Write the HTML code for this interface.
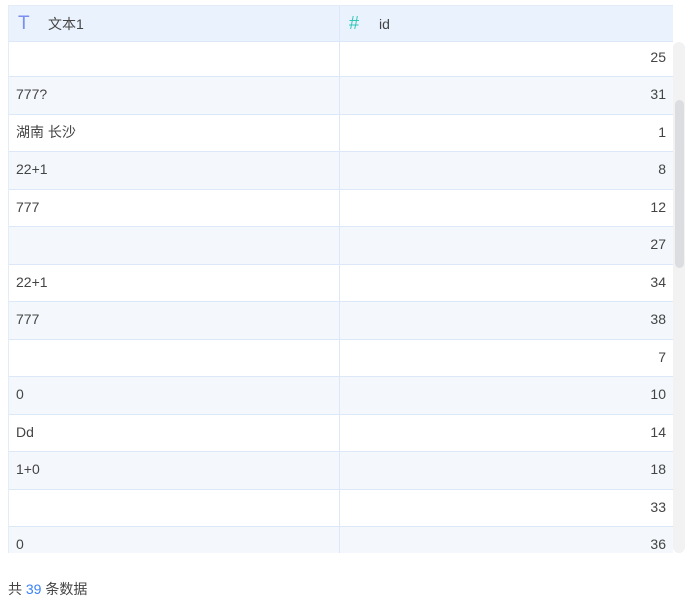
<!DOCTYPE html>
<html><head><meta charset="utf-8"><style>
body{margin:0;background:#fff;font-family:"Liberation Sans","Noto Sans CJK SC",sans-serif;font-size:14px;color:#444;}
.wrap{position:absolute;left:8px;top:5px;width:664px;height:548px;overflow:hidden;border-left:1px solid #e3ecf7;}
.hd{height:35px;background:#eaf2fd;border-top:1px solid #e3ecf7;border-bottom:1px solid #dce8f8;display:flex;}
.hd div{line-height:35px;}
.c1{width:331px;border-right:1px solid #dce8f8;box-sizing:border-box;padding-left:7px;}
.c2{flex:1;padding-right:7px;text-align:right;}
.hd .c2{text-align:left;padding-left:9px;}
.row{height:36.5px;border-bottom:1px solid #dce8f8;display:flex;line-height:34px;}
.row.first{height:34px;line-height:31px;}
.ic{display:inline-block;width:22px;font-size:19px;}
.track{position:absolute;left:673px;top:42px;width:12px;height:511px;background:#f2f2f2;border-radius:6px;}
.thumb{position:absolute;left:675px;top:100px;width:9px;height:168px;background:#dcdde1;border-radius:5px;}
.ft{position:absolute;left:8px;top:579px;font-size:14px;}
</style></head><body>
<div class="wrap">
<div class="hd"><div class="c1" style="padding-left:9px"><span class="ic" style="color:#7b8ff0">T</span><span style="margin-left:8px">文本1</span></div><div class="c2"><span class="ic" style="color:#2fc5b8;font-size:18px">#</span><span style="margin-left:8px">id</span></div></div>
<div class="rows">
<div class="row first" style="background:#fff"><div class="c1"></div><div class="c2">25</div></div>
<div class="row" style="background:#f4f8fd"><div class="c1">777?</div><div class="c2">31</div></div>
<div class="row" style="background:#fff"><div class="c1">湖南 长沙</div><div class="c2">1</div></div>
<div class="row" style="background:#f4f8fd"><div class="c1">22+1</div><div class="c2">8</div></div>
<div class="row" style="background:#fff"><div class="c1">777</div><div class="c2">12</div></div>
<div class="row" style="background:#f4f8fd"><div class="c1"></div><div class="c2">27</div></div>
<div class="row" style="background:#fff"><div class="c1">22+1</div><div class="c2">34</div></div>
<div class="row" style="background:#f4f8fd"><div class="c1">777</div><div class="c2">38</div></div>
<div class="row" style="background:#fff"><div class="c1"></div><div class="c2">7</div></div>
<div class="row" style="background:#f4f8fd"><div class="c1">0</div><div class="c2">10</div></div>
<div class="row" style="background:#fff"><div class="c1">Dd</div><div class="c2">14</div></div>
<div class="row" style="background:#f4f8fd"><div class="c1">1+0</div><div class="c2">18</div></div>
<div class="row" style="background:#fff"><div class="c1"></div><div class="c2">33</div></div>
<div class="row" style="background:#f4f8fd"><div class="c1">0</div><div class="c2">36</div></div>
</div>
</div>
<div class="track"></div><div class="thumb"></div>
<div class="ft">共 <span style="color:#3b82f6">39</span> 条数据</div>
</body></html>
